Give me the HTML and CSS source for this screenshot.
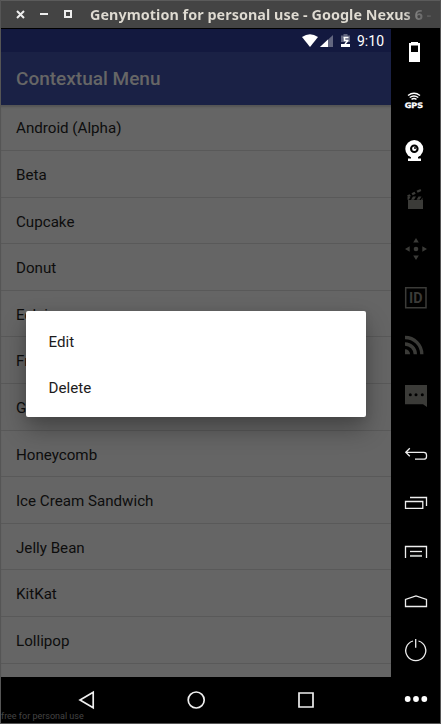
FILE: index.html
```html
<!DOCTYPE html>
<html lang="en">
<head>
<meta charset="utf-8">
<title>Contextual Menu</title>
<link rel="stylesheet" href="styles.css">
</head>
<body>
<div class="window">
  <header class="titlebar">
    <svg class="controls" width="60" height="14" viewBox="0 0 60 14"><path d="M3 3l7 7M10 3l-7 7" stroke="#eee" stroke-width="2"/><path d="M26 6h8" stroke="#eee" stroke-width="2"/><path d="M51 3h6v6h-6z" fill="none" stroke="#eee" stroke-width="2"/></svg>
    <span class="title">Genymotion for personal use - Google Nexus 6 -</span>
  </header>
  <div class="main">
    <div class="device">
      <div class="statusbar">
        <svg width="55" height="16" viewBox="0 0 55 16"><path d="M1 4Q9 -1.500 17 4L9 14z" fill="#fff"/><path d="M32 2v12H19z" fill="#62667f"/><path d="M27 6.500v7.500h-8z" fill="#fff"/><path d="M40 2.500h2.500V1h4v1.500H49V9h-9z" fill="#62667f"/><path d="M40 11h9v3h-9z" fill="#fff"/><path d="M42.500 4.500h5M43.500 4v3.500h4M47 7.500l-3 3.500" fill="none" stroke="#fff" stroke-width="1.500"/></svg>
        <span class="time">9:10</span>
      </div>
      <div class="appbar"><h1>Contextual Menu</h1></div>
      <ul class="list">
        <li>Android (Alpha)</li><li>Beta</li><li>Cupcake</li><li>Donut</li><li>Eclair</li><li>Froyo</li><li>Gingerbread</li><li>Honeycomb</li><li>Ice Cream Sandwich</li><li>Jelly Bean</li><li>KitKat</li><li>Lollipop</li><li></li>
      </ul>
      <div class="navbar">
        <svg width="20" height="20" viewBox="0 0 20 20"><path d="M17.200 2.200v15.600L4 10z"/></svg>
        <svg width="20" height="20" viewBox="0 0 20 20"><circle cx="10.200" cy="10" r="8"/></svg>
        <svg width="20" height="20" viewBox="0 0 20 20"><path d="M3 3h14v14H3z"/></svg>
        <span class="watermark">free for personal use</span>
      </div>
      <div class="dialog"><div class="option">Edit</div><div class="option">Delete</div></div>
    </div>
    <aside class="toolbar">
      <div class="group">
        <svg viewBox="0 0 49 49"><path fill="#fff" fill-rule="evenodd" d="M20 14h7v1h2v19H18V15h2zM20 17.500v6.500h7v-6.500z"/></svg>
        <svg viewBox="0 0 49 49"><g fill="none" stroke="#fff" stroke-width="1.400"><path d="M17 18.500q6-4.500 12 0M18.700 20.500q4.300-3 8.600 0M20.500 22.300q2.500-1.500 5 0"/></g><text class="gps" x="13.700" y="31" textLength="18.500" lengthAdjust="spacingAndGlyphs">GPS</text></svg>
        <svg viewBox="0 0 49 49"><circle cx="23.300" cy="23" r="9" fill="#fff"/><circle cx="23.300" cy="22.800" r="4.300"/><circle cx="23.300" cy="22.800" r="2.200" fill="#fff"/><circle cx="24" cy="22" r="1"/><path fill="#fff" d="M20 30h7v2.500h3V35H17v-2.500h3z"/></svg>
        <svg viewBox="0 0 49 49" fill="#3b3b38"><path d="M17 25h15v9H17z"/><path d="M16.500 21.500h3L18 24.800h-1.500zM22 21.500h3L23 24.800h-3zM27.500 21.500h3l-2 3.300h-3zM31.500 22.500V25H30zM16 20.500l2.500-1.200 1.500 1.700-3 .5zM20.500 18.200l3-1.400 1.200 2-3 1.400zM25.500 15.800l4-1.800.8 2-3.600 1.800z"/></svg>
        <svg viewBox="0 0 49 49" fill="#3b3b38"><path d="M25 14l2.800 4.500h-5.600zM25 36l2.800-4.500h-5.600zM14 25l4.700-2.700v5.400zM36 25l-4.700-2.700v5.400z"/><circle cx="25" cy="25" r="2.300"/></svg>
        <svg viewBox="0 0 49 49"><path d="M14.700 14.700h20.300v20H14.700z" fill="none" stroke="#3b3b38" stroke-width="1.500"/><text class="id" x="18" y="30" textLength="13.500" lengthAdjust="spacingAndGlyphs">ID</text></svg>
        <svg viewBox="0 0 49 49" fill="none" stroke="#3b3b38" stroke-width="3.300"><path d="M14 15.500a16.800 16.800 0 0 1 16.800 16.800M14 22a10.300 10.300 0 0 1 10.300 10.300"/><path d="M14 27.200a5.100 5.100 0 0 1 5.100 5.100H14z" fill="#3b3b38" stroke="none"/></svg>
        <svg viewBox="0 0 49 49"><path fill="#3b3b38" d="M14 14h22v22l-4-2.700H14z"/><circle cx="19.300" cy="23.800" r="1.500"/><circle cx="25" cy="23.800" r="1.500"/><circle cx="31.300" cy="23.800" r="1.500"/></svg>
      </div>
      <div class="group lines">
        <svg viewBox="0 0 49 49"><path d="M18.800 18.300l-4 4 4 4M15 22.300h17.700q2.800 0 2.800 2.700v1.700q0 2.500-2.800 2.500H24"/></svg>
        <svg viewBox="0 0 49 49"><path d="M14.500 22.500h17.300v6.800H14.500zM19 18.500h16.500V27"/></svg>
        <svg viewBox="0 0 49 49"><path d="M14.500 30V18.500h21V30"/><path d="M19 23.500h12"/><path d="M19 27.900h12" stroke="#b4b7b5" stroke-width="2"/></svg>
        <svg viewBox="0 0 49 49"><path d="M14.500 29.500v-7L25 19l10.500 3.500v7z"/></svg>
        <svg viewBox="0 0 49 49"><path d="M22 15a10 10 0 1 0 5.500 0M24.700 13v8.700"/></svg>
        <svg viewBox="0 0 49 49"><g fill="#fff" stroke="none"><circle cx="16.700" cy="24" r="2.900"/><circle cx="25" cy="24" r="2.900"/><circle cx="33.300" cy="24" r="2.900"/></g></svg>
      </div>
    </aside>
  </div>
</div>
</body>
</html>
```
FILE: styles.css
```css
* { box-sizing: border-box; }
body { margin: 0; font-family: Roboto, sans-serif; background: #000; }
.window { width: 441px; height: 724px; display: flex; flex-direction: column; overflow: hidden; border: 1px solid #555; border-top: 0; }
.titlebar { height: 28px; flex: none; display: flex; align-items: center; background: #444; border-top: 1px solid #5b5b5b; padding-left: 13px; }
.controls { flex: none; margin-right: 16px; }
.title { font: bold 14.4px "Noto Sans", sans-serif; white-space: nowrap; letter-spacing: 0.03px; line-height: 20px; color: transparent; background: linear-gradient(90deg, #dfdbd2 0 92%, #777 96%, #555); background-clip: text; -webkit-background-clip: text; }
.main { display: flex; flex: 1; min-height: 0; }
.device { width: 390px; flex: none; display: flex; flex-direction: column; position: relative; border-top: 1px solid #000; }
.statusbar { height: 23px; flex: none; background: #13193f; display: flex; align-items: center; justify-content: flex-end; padding-right: 8px; color: #fff; }
.time { font-size: 14px; width: 26px; margin-left: 1px; line-height: 16px; white-space: nowrap; }
.statusbar svg { flex: none; }
.appbar { height: 53px; flex: none; background: #1a2145; display: flex; align-items: center; padding-left: 15px; }
h1 { margin: 0; font-size: 19px; font-weight: 500; color: #666; line-height: 24px; padding-top: 1px; }
.list { flex: 1; min-height: 0; overflow: hidden; margin: 0; padding: 0; list-style: none; background: #656565; box-shadow: inset 0 3px 2px -1px #555; }
.list li { height: 46.6px; padding-left: 15px; line-height: 48.4px; font-size: 15.15px; color: #0d0d0d; border-bottom: 1px solid #595959; }
.list li:first-child { height: 46px; line-height: 47.4px; }
.navbar { height: 46px; flex: none; background: #000; display: flex; gap: 90px; justify-content: center; align-items: center; position: relative; }
.navbar svg { fill: none; stroke: #eee; stroke-width: 1.7; }
.watermark { position: absolute; left: 0; bottom: 1px; font-size: 9px; line-height: 11px; color: #444; white-space: nowrap; }
.dialog { position: absolute; left: 25px; top: 282px; width: 340px; height: 106px; padding: 8px 0; background: #fff; border-radius: 2px; box-shadow: 0 12px 24px rgba(0,0,0,.32), 0 1px 8px rgba(0,0,0,.08); }
.option { height: 45.5px; padding-left: 22.5px; font-size: 15.15px; line-height: 46px; color: #1c1c1c; }
.toolbar { flex: 1; background: #000; display: flex; flex-direction: column; justify-content: space-between; }
.group { display: flex; flex-direction: column; }
.group svg { width: 49px; height: 49px; display: block; }
.toolbar .lines { margin-bottom: -1px; }
.lines svg { fill: none; stroke: #eee; stroke-width: 1.3; }
.gps { font: bold 7.5px "DejaVu Sans", sans-serif; fill: #fff; stroke: #fff; stroke-width: 0.3; }
.id { font: bold 14px Roboto, sans-serif; fill: #3b3b38; }
```
